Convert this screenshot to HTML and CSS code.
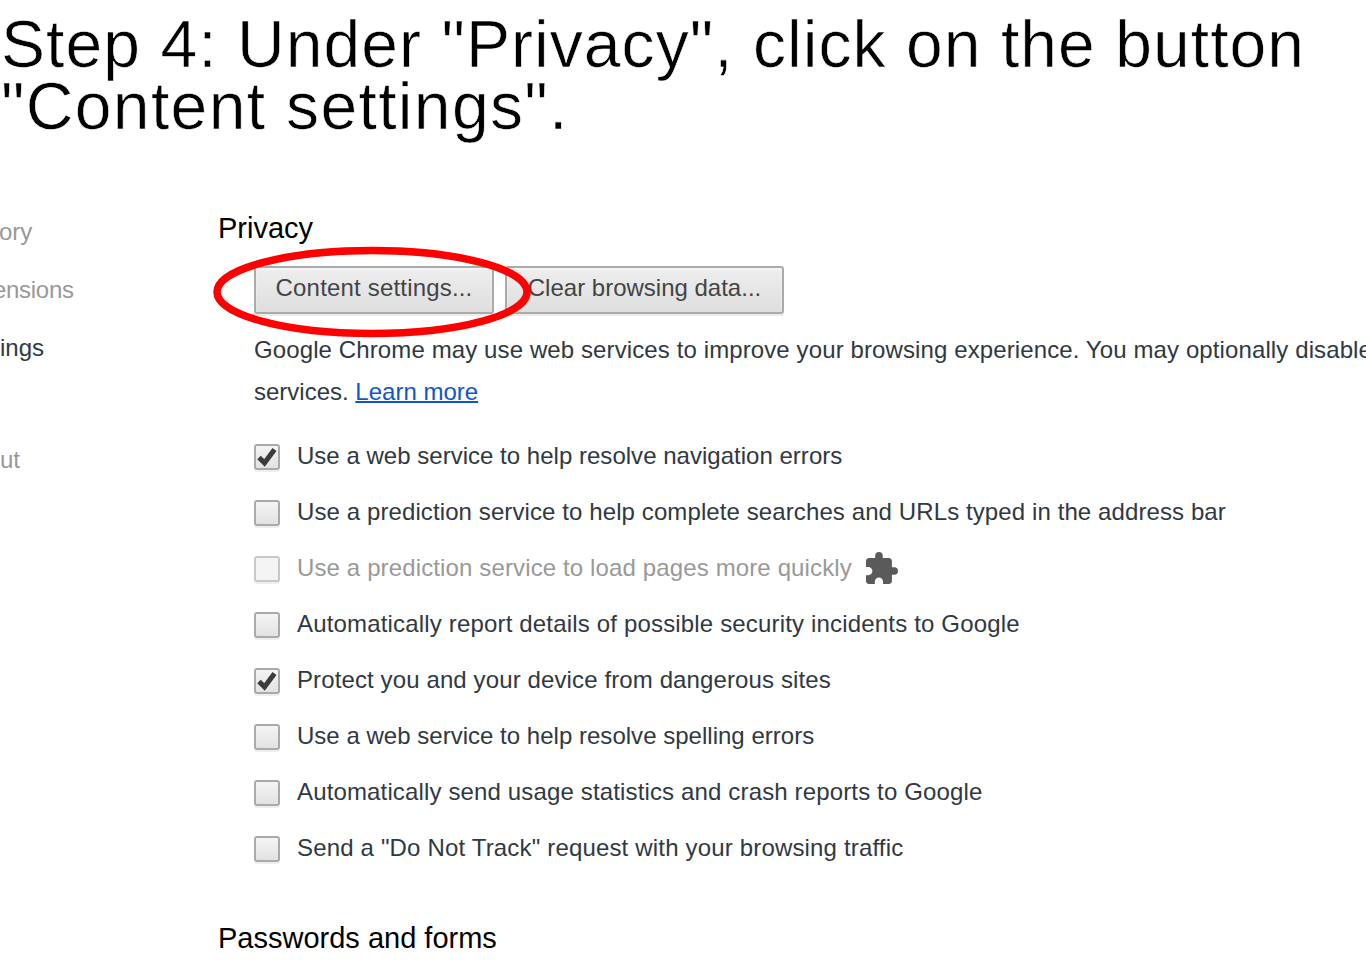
FILE: index.html
```html
<!DOCTYPE html>
<html lang="en">
<head>
<meta charset="utf-8">
<title>Step 4</title>
<link rel="stylesheet" href="styles.css">
</head>
<body>
<h1 class="title"><span class="title-first">Step 4: Under "Privacy", click on the button</span><br><span class="title-second">"Content settings".</span></h1>
<div class="page">
  <nav class="side">
    <a class="item history">ory</a>
    <a class="item extensions">ensions</a>
    <a class="item current">ings</a>
    <a class="item about">ut</a>
  </nav>
  <main class="main">
    <h2 class="heading">Privacy</h2>
    <section class="section">
      <div class="buttons">
        <button class="btn content">Content settings...</button>
        <button class="btn clear">Clear browsing data...</button>
        <svg class="ring" width="320" height="94" viewBox="0 0 320 94"><ellipse cx="160" cy="47" rx="155" ry="41.500" fill="none" stroke="#f00" stroke-width="7.500"/></svg>
      </div>
      <p class="note"><span class="note-line">Google Chrome may use web services to improve your browsing experience. You may optionally disable</span><br>services. <a class="link">Learn more</a></p>
      <div class="options">
        <label class="row"><span class="box"><svg class="tick" viewBox="0 0 22 22"><path d="M3 11.500l5.500 5.500L18.500 3.500" fill="none" stroke="#3c3c3c" stroke-width="5"/></svg></span><span class="t1">Use a web service to help resolve navigation errors</span></label>
        <label class="row"><span class="box"></span><span class="t2">Use a prediction service to help complete searches and URLs typed in the address bar</span></label>
        <label class="row off"><span class="box"></span><span class="t3">Use a prediction service to load pages more quickly</span><svg class="puzzle" viewBox="2 1 21 21"><path fill="#5a5a5a" d="M20.500 11H19V7c0-1.100-.9-2-2-2h-4V3.500a2.500 2.500 0 0 0-5 0V5H4c-1.100 0-1.990.9-1.990 2v3.800H3.500c1.490 0 2.700 1.210 2.700 2.700s-1.210 2.700-2.700 2.700H2V20c0 1.100.9 2 2 2h3.800v-1.500c0-1.490 1.210-2.700 2.700-2.700s2.700 1.210 2.700 2.700V22H17c1.100 0 2-.9 2-2v-4h1.500a2.500 2.500 0 0 0 0-5z"/></svg></label>
        <label class="row"><span class="box"></span><span class="t4">Automatically report details of possible security incidents to Google</span></label>
        <label class="row"><span class="box"><svg class="tick" viewBox="0 0 22 22"><path d="M3 11.500l5.500 5.500L18.500 3.500" fill="none" stroke="#3c3c3c" stroke-width="5"/></svg></span><span class="t5">Protect you and your device from dangerous sites</span></label>
        <label class="row"><span class="box"></span><span class="t6">Use a web service to help resolve spelling errors</span></label>
        <label class="row"><span class="box"></span><span class="t7">Automatically send usage statistics and crash reports to Google</span></label>
        <label class="row"><span class="box"></span><span class="t8">Send a "Do Not Track" request with your browsing traffic</span></label>
      </div>
    </section>
    <h2 class="heading">Passwords and forms</h2>
  </main>
</div>
</body>
</html>
```
FILE: styles.css
```css
* { box-sizing: border-box; }
body {
  margin: 0;
  height: 968px;
  overflow: hidden;
  background: #fff;
  color: #303942;
  font-family: "Liberation Sans", Arial, sans-serif;
  font-size: 24px;
}
.title {
  margin: 0;
  padding: 13px 0 0 1px;
  height: 208px;
  color: #000;
  font-size: 66px;
  font-weight: 400;
  line-height: 62px;
  white-space: nowrap;
  -webkit-text-stroke: 0.6px #fff;
}
.title-first { letter-spacing: 1.060px; }
.title-second { letter-spacing: 1.350px; }
.page { display: flex; }
.side {
  width: 218px;
  flex: none;
  padding-top: 4px;
  display: flex;
  flex-direction: column;
  overflow: hidden;
}
.item { height: 58px; line-height: 40px; color: #999; white-space: nowrap; }
.history { margin-left: -1px; }
.extensions { margin-left: -7px; letter-spacing: -0.3px; }
.current { height: 112px; color: #303942; }
.heading {
  margin: 0;
  height: 58px;
  line-height: 40px;
  color: #000;
  font-size: 29px;
  font-weight: 400;
  white-space: nowrap;
}
.main { flex: none; width: 1148px; }
.section { padding-left: 36px; height: 652px; }
.buttons { position: relative; display: flex; gap: 11px; height: 63px; }
.btn {
  height: 48px;
  padding: 0 0 4px;
  border: 2px solid #aaa;
  border-radius: 3px;
  background: linear-gradient(#eee, #dedede);
  box-shadow: 0 2px 0 #ececec, inset 0 2px 2px #f6f6f6;
  color: #444;
  font: 24px/38px "Liberation Sans", Arial, sans-serif;
  white-space: nowrap;
}
.content { width: 240px; letter-spacing: 0.180px; }
.clear { width: 279px; }
.ring { position: absolute; left: -42px; top: -21.500px; }
.note { margin: 0; height: 100px; line-height: 42px; white-space: nowrap; }
.note-line { letter-spacing: 0.110px; }
.link { color: #15c; text-decoration: underline; text-decoration-thickness: 2px; }
.row { display: flex; height: 56px; line-height: 54px; white-space: nowrap; }
.off { color: #999; }
.box {
  flex: none;
  width: 26px;
  height: 26px;
  margin: 15px 17px 0 0;
  border: 2px solid #aaa;
  border-radius: 3px;
  background: linear-gradient(#f4f4f4, #e2e2e2);
  box-shadow: 0 2px 1px #eee;
}
.off .box { border-color: #c8c8c8; background: #f4f4f4; }
.t1, .t6 { letter-spacing: 0.020px; }
.t2 { letter-spacing: 0.100px; }
.t3 { letter-spacing: 0.130px; }
.t4 { letter-spacing: 0.170px; }
.t5 { letter-spacing: 0.115px; }
.t7 { letter-spacing: 0.145px; }
.t8 { letter-spacing: 0.170px; }
.tick { display: block; width: 22px; height: 22px; }
.puzzle { width: 32px; height: 32px; margin: 11px 0 0 14px; }
```
